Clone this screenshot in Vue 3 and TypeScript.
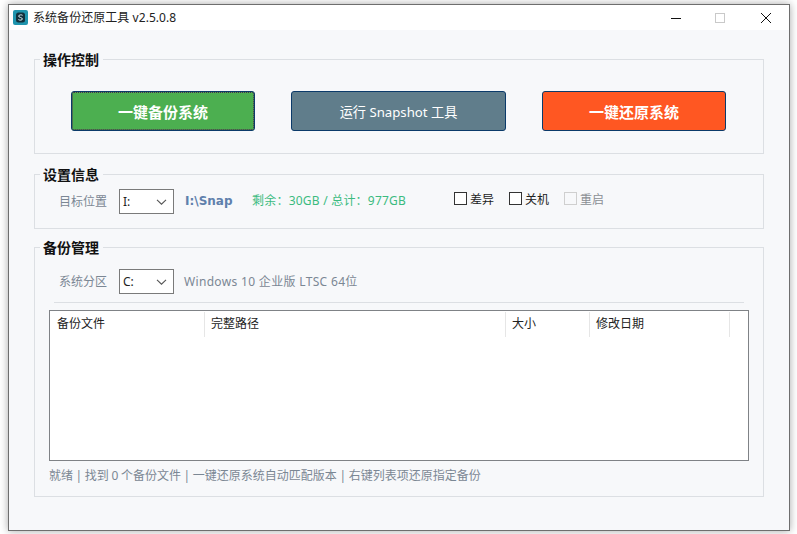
<script setup lang="ts">
const columns = ['备份文件', '完整路径', '大小', '修改日期', '']
const options = [
  { label: '差异', disabled: false },
  { label: '关机', disabled: false },
  { label: '重启', disabled: true },
]
</script>

<template>
  <div class="page">
    <div class="window">
      <header class="titlebar">
        <svg class="app-icon" viewBox="0 0 15 15" width="15" height="15">
          <rect width="15" height="15" rx="2" fill="#1f94ad" />
          <rect x="3" y="2.5" width="9" height="10" rx="2.5" fill="#12303c" />
          <path d="M9.6 5.3C9 4.7 6 4.5 5.6 6c-.3 1.6 3.8 1.2 3.8 3 0 1.4-3 1.4-4 .6" fill="none" stroke="#d8eef3" stroke-width="1" />
        </svg>
        <span class="title">系统备份还原工具 v2.5.0.8</span>
        <div class="controls">
          <svg width="12" height="12" viewBox="0 0 12 12" class="ctl min"><path d="M1 6.5h10" stroke="#111" stroke-width="1" /></svg>
          <svg width="12" height="12" viewBox="0 0 12 12" class="ctl max"><rect x="1.5" y="1.5" width="9" height="9" fill="none" stroke="#c9c9c9" /></svg>
          <svg width="12" height="12" viewBox="0 0 12 12" class="ctl close"><path d="M1 1l10 10M11 1L1 11" stroke="#111" stroke-width="1" /></svg>
        </div>
      </header>

      <main class="body">
        <fieldset class="group group-actions">
          <legend>操作控制</legend>
          <div class="buttons">
            <button class="btn primary focused">一键备份系统</button>
            <button class="btn neutral">运行 Snapshot 工具</button>
            <button class="btn danger">一键还原系统</button>
          </div>
        </fieldset>

        <fieldset class="group group-settings">
          <legend>设置信息</legend>
          <div class="row">
            <span class="field-label">目标位置</span>
            <div class="select">
              <span>I:</span>
              <svg width="11" height="6" viewBox="0 0 11 6"><path d="M1 .8l4.5 4.4L10 .8" fill="none" stroke="#555" stroke-width="1.1" /></svg>
            </div>
            <span class="path">I:\Snap</span>
            <span class="free">剩余：30GB / 总计：977GB</span>
            <div class="checks">
              <label v-for="o in options" :key="o.label" class="check" :class="{ disabled: o.disabled }">
                <span class="box"></span>{{ o.label }}
              </label>
            </div>
          </div>
        </fieldset>

        <fieldset class="group group-manage">
          <legend>备份管理</legend>
          <div class="row">
            <span class="field-label">系统分区</span>
            <div class="select">
              <span>C:</span>
              <svg width="11" height="6" viewBox="0 0 11 6"><path d="M1 .8l4.5 4.4L10 .8" fill="none" stroke="#555" stroke-width="1.1" /></svg>
            </div>
            <span class="os">Windows 10 企业版 LTSC 64位</span>
          </div>
          <div class="divider"></div>
          <div class="table">
            <div class="thead">
              <div v-for="(c, i) in columns" :key="i" class="th">{{ c }}</div>
            </div>
          </div>
          <p class="status">就绪 | 找到 0 个备份文件 | 一键还原系统自动匹配版本 | 右键列表项还原指定备份</p>
        </fieldset>
      </main>
    </div>
  </div>
</template>

<style>
html, body { margin: 0; background: #fff; }
</style>

<style scoped>
.page {
  width: 797px;
  height: 534px;
  padding: 4px 0 0 8px;
  box-sizing: border-box;
  overflow: hidden;
  font-family: "Noto Sans CJK SC", "Noto Sans", sans-serif;
  font-size: 12px;
}
.window {
  width: 782px;
  height: 527px;
  box-sizing: border-box;
  border: 1px solid #6e6e6e;
  background: #f7f8fa;
  box-shadow: 0 0 8px rgba(0, 0, 0, 0.35);
  display: flex;
  flex-direction: column;
}
.titlebar {
  height: 25px;
  flex: none;
  background: #fff;
  display: flex;
  align-items: center;
  padding-left: 4px;
}
.app-icon { margin-right: 5px; flex: none; }
.title {
  font-family: "Noto Sans", "Noto Sans CJK SC", sans-serif;
  color: #222;
  font-size: 12px;
  line-height: 22px;
  letter-spacing: .05px;
}
.controls { margin-left: auto; display: flex; align-items: center; }
.ctl { display: block; flex: none; }
.min { margin-right: 32px; }
.max { margin-right: 34px; }
.close { margin-right: 17px; }

.body { padding: 19px 25px 0; flex: 1; }
.group {
  margin: 0 0 8px;
  padding: 0 14px;
  border: 1px solid #dcdfe3;
  min-width: 0;
}
.group legend {
  margin-left: -9px;
  padding: 0 4px 0 3px;
  font-size: 14px;
  font-weight: 700;
  line-height: 20px;
  height: 20px;
  color: #111;
}
.group-actions { padding: 22px 36px 22px; margin-bottom: 10px; }
.group-actions legend { margin-left: -31px; }
.group-settings { padding: 5px 14px 14px; }
.group-manage { padding: 12px 14px 0; height: 260px; box-sizing: border-box; }

.buttons { display: flex; gap: 36px; }
.btn {
  height: 40px;
  width: 184px;
  flex: none;
  border: 1px solid #0b3a6a;
  border-radius: 3px;
  color: #fff;
  font-family: "Noto Sans CJK SC", sans-serif;
  font-size: 15px;
  font-weight: 700;
  padding: 0;
}
.primary { background: #4caf50; }
.danger { background: #ff5722; }
.neutral {
  width: 215px;
  background: #607d8b;
  font-weight: 400;
  font-size: 13.2px;
  font-family: "Noto Sans", "Noto Sans CJK SC", sans-serif;
}
.focused { outline: 1px dotted #4a2a4a; outline-offset: -2px; }

.row { display: flex; align-items: center; height: 25px; }
.field-label { margin-left: 10px; width: 60px; color: #7b8794; flex: none; padding-bottom: 3px; }
.select {
  width: 55px;
  height: 25px;
  box-sizing: border-box;
  border: 1px solid #7a7a7a;
  background: #fff;
  display: flex;
  align-items: center;
  justify-content: space-between;
  padding: 0 6px 0 3px;
  color: #222;
  flex: none;
  font-family: "Noto Sans", sans-serif;
}
.path {
  margin-left: 11px;
  width: 67px;
  flex: none;
  color: #5f80ac;
  font-weight: 700;
  font-size: 12px;
  padding-bottom: 2px;
  font-family: "DejaVu Sans", sans-serif;
}
.free {
  width: 202px;
  flex: none;
  color: #3bbb7f;
  font-family: "Noto Sans", "Noto Sans CJK SC", sans-serif;
  letter-spacing: .22px;
  padding-bottom: 3px;
}
.checks { display: flex; gap: 15px; padding-bottom: 6px; }
.check { display: flex; align-items: center; color: #222; }
.box {
  width: 13px;
  height: 13px;
  box-sizing: border-box;
  border: 1px solid #333;
  background: #fff;
  margin-right: 3px;
}
.check.disabled { color: #8b8f94; }
.check.disabled .box { border-color: #cfcfcf; background: transparent; }

.os {
  margin-left: 10px;
  color: #7b8794;
  font-family: "Noto Sans", "Noto Sans CJK SC", sans-serif;
  letter-spacing: .33px;
  padding-bottom: 1px;
}
.divider { height: 1px; background: #dcdfe3; margin: 8px 5px 7px; }
.table {
  height: 151px;
  box-sizing: border-box;
  border: 1px solid #7f8286;
  background: #fff;
}
.thead {
  display: grid;
  grid-template-columns: 155px 301px 84px 140px 1fr;
  height: 25px;
  margin-top: 1px;
}
.th {
  box-sizing: border-box;
  padding-left: 6px;
  border-right: 1px solid #e6e6e6;
  color: #222;
  line-height: 22px;
}
.th:first-child { padding-left: 7px; }
.th:last-child { border-right: 0; }
.status {
  margin: 7px 0 0;
  color: #7b8794;
  line-height: 16px;
  font-family: "Noto Sans", "Noto Sans CJK SC", sans-serif;
  word-spacing: -.5px;
}
</style>
